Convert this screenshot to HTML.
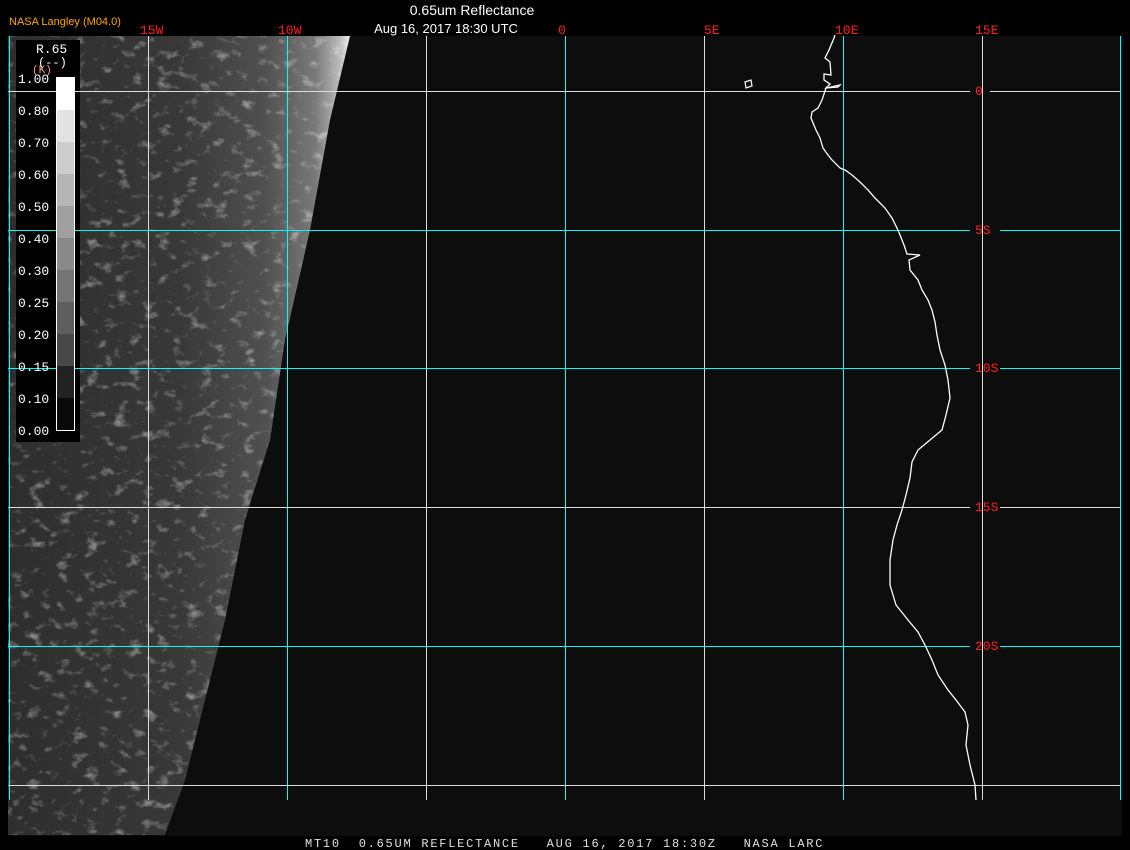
<!DOCTYPE html>
<html><head><style>
html,body{margin:0;padding:0;background:#000;width:1130px;height:850px;overflow:hidden}
svg{display:block}
text{font-family:"Liberation Mono","DejaVu Sans Mono",monospace}
</style></head><body>
<svg width="1130" height="850" viewBox="0 0 1130 850" xmlns="http://www.w3.org/2000/svg">
<defs>
<filter id="tex" x="0" y="0" width="100%" height="100%">
<feTurbulence type="fractalNoise" baseFrequency="0.07 0.1" numOctaves="3" seed="7" result="n"/>
<feColorMatrix in="n" type="matrix" values="0 0 0 0 1  0 0 0 0 1  0 0 0 0 1  3.5 0 0 0 -2.0" result="a"/>
<feComposite in="a" in2="SourceGraphic" operator="in"/>
</filter>
<linearGradient id="lg" x1="0" y1="0" x2="1" y2="0">
<stop offset="0" stop-color="#2e2e2e"/>
<stop offset="0.5" stop-color="#383838"/>
<stop offset="0.75" stop-color="#505050"/>
<stop offset="0.9" stop-color="#7a7a7a"/>
<stop offset="0.97" stop-color="#bbb"/>
<stop offset="1" stop-color="#eee"/>
</linearGradient>
</defs>
<rect x="8" y="36" width="1114" height="800" fill="#0d0d0d"/>
<polygon points="8,36 350,36 330,120 310,230 285,340 270,440 245,520 225,620 205,700 185,780 165,835 8,835" fill="url(#lg)"/>
<polygon points="8,36 350,36 330,120 310,230 285,340 270,440 245,520 225,620 205,700 185,780 165,835 8,835" fill="#fff" filter="url(#tex)" opacity="0.4"/>
<g stroke-width="1" shape-rendering="crispEdges">
<line x1="148.5" y1="36" x2="148.5" y2="800" stroke="#dcdcdc"/>
<line x1="287.5" y1="36" x2="287.5" y2="800" stroke="#00ffff"/>
<line x1="426.5" y1="36" x2="426.5" y2="800" stroke="#dcdcdc"/>
<line x1="565.5" y1="36" x2="565.5" y2="800" stroke="#00ffff"/>
<line x1="704.5" y1="36" x2="704.5" y2="800" stroke="#dcdcdc"/>
<line x1="843.5" y1="36" x2="843.5" y2="800" stroke="#00ffff"/>
<line x1="982.5" y1="36" x2="982.5" y2="800" stroke="#dcdcdc"/>
<line x1="1120.5" y1="36" x2="1120.5" y2="800" stroke="#00ffff"/>
<line x1="8" y1="91.5" x2="970" y2="91.5" stroke="#dcdcdc"/><line x1="990" y1="91.5" x2="1120" y2="91.5" stroke="#dcdcdc"/>
<line x1="8" y1="230.5" x2="970" y2="230.5" stroke="#00ffff"/><line x1="1000" y1="230.5" x2="1120" y2="230.5" stroke="#00ffff"/>
<line x1="8" y1="368.5" x2="970" y2="368.5" stroke="#00ffff"/><line x1="1000" y1="368.5" x2="1120" y2="368.5" stroke="#00ffff"/>
<line x1="8" y1="507.5" x2="970" y2="507.5" stroke="#dcdcdc"/><line x1="1000" y1="507.5" x2="1120" y2="507.5" stroke="#dcdcdc"/>
<line x1="8" y1="646.5" x2="970" y2="646.5" stroke="#00ffff"/><line x1="1000" y1="646.5" x2="1120" y2="646.5" stroke="#00ffff"/>
<line x1="8" y1="785.5" x2="1120" y2="785.5" stroke="#dcdcdc"/>
</g>
<path d="M841,4 L838,10 L837,28 L834,38 L829,50 L825,58 L830,62 L831,75 L824,74 L824,80 L830,84 L826,88 L838,87 L840,85 L826,88 L822,100 L818,108 L812,112 L811,118 L816,130 L820,138 L823,148 L828,155 L832,160 L840,168 L845,170 L852,175 L860,182 L868,190 L875,198 L885,208 L892,218 L897,228 L900,235 L904,245 L907,254 L920,255 L909,260 L910,270 L918,280 L922,290 L928,300 L932,310 L935,322 L937,335 L940,350 L945,365 L948,380 L950,398 L946,415 L942,430 L930,440 L918,450 L912,462 L910,478 L906,495 L902,510 L897,525 L893,540 L890,560 L890,585 L896,605 L908,620 L918,632 L925,645 L932,660 L938,675 L948,690 L956,700 L965,712 L968,725 L966,745 L970,765 L975,785 L976,800" fill="none" stroke="#fff" stroke-width="1.3"/>
<path d="M745,82 L751,80 L752,86 L746,88 Z" fill="none" stroke="#fff" stroke-width="1.2"/>
<rect x="0" y="0" width="1130" height="35" fill="#000"/>
<rect x="0" y="836" width="1130" height="14" fill="#000"/>
<rect x="0" y="36" width="8" height="800" fill="#000"/>
<rect x="1123" y="36" width="7" height="800" fill="#000"/>
<rect x="16" y="40" width="64" height="402" fill="#000"/>
<g shape-rendering="crispEdges">
<line x1="9.5" y1="36" x2="9.5" y2="800" stroke="#00ffff"/>
<line x1="8" y1="91.5" x2="80" y2="91.5" stroke="#dcdcdc"/>
<line x1="8" y1="230.5" x2="80" y2="230.5" stroke="#00ffff"/>
<line x1="8" y1="368.5" x2="80" y2="368.5" stroke="#00ffff"/>
</g>
<g>
<rect x="56" y="77" width="19" height="33" fill="#fff"/>
<rect x="56" y="110" width="19" height="32" fill="#e2e2e2"/>
<rect x="56" y="142" width="19" height="32" fill="#cccccc"/>
<rect x="56" y="174" width="19" height="32" fill="#b5b5b5"/>
<rect x="56" y="206" width="19" height="32" fill="#a0a0a0"/>
<rect x="56" y="238" width="19" height="32" fill="#8a8a8a"/>
<rect x="56" y="270" width="19" height="32" fill="#747474"/>
<rect x="56" y="302" width="19" height="32" fill="#5e5e5e"/>
<rect x="56" y="334" width="19" height="32" fill="#484848"/>
<rect x="56" y="366" width="19" height="32" fill="#222"/>
<rect x="56" y="398" width="19" height="32" fill="#0a0a0a"/>
<rect x="56.5" y="77.5" width="18" height="353" fill="none" stroke="#fff"/>
</g>
<g fill="#fff" font-size="13">
<text x="36" y="53">R.65</text>
<text x="38" y="66" font-size="12">(--)</text>
<text x="18" y="83">1.00</text><text x="18" y="115">0.80</text><text x="18" y="147">0.70</text>
<text x="18" y="179">0.60</text><text x="18" y="211">0.50</text><text x="18" y="243">0.40</text>
<text x="18" y="275">0.30</text><text x="18" y="307">0.25</text><text x="18" y="339">0.20</text>
<text x="18" y="371">0.15</text><text x="18" y="403">0.10</text><text x="18" y="435">0.00</text>
</g>
<text x="32" y="73" fill="#f0a080" font-size="11">(K)</text>
<text x="9" y="25" fill="#ffa500" font-size="11" style="font-family:'Liberation Sans',sans-serif">NASA Langley (M04.0)</text>
<text x="472" y="15" fill="#fff" font-size="14" text-anchor="middle" style="font-family:'Liberation Sans',sans-serif">0.65um Reflectance</text>
<text x="446" y="33" fill="#fff" font-size="13" text-anchor="middle" style="font-family:'Liberation Sans',sans-serif">Aug 16, 2017 18:30 UTC</text>
<g fill="#ff2020" font-size="13">
<text x="140" y="34">15W</text><text x="278" y="34">10W</text><text x="558" y="34">0</text>
<text x="704" y="34">5E</text><text x="835" y="34">10E</text><text x="975" y="34">15E</text>
<text x="975" y="95">0</text><text x="975" y="234">5S</text><text x="975" y="372">10S</text>
<text x="975" y="511">15S</text><text x="975" y="650">20S</text>
</g>
<text x="305" y="847" fill="#e0e0e0" font-size="12" letter-spacing="1.75" xml:space="preserve">MT10  0.65UM REFLECTANCE   AUG 16, 2017 18:30Z   NASA LARC</text>
</svg>
</body></html>
